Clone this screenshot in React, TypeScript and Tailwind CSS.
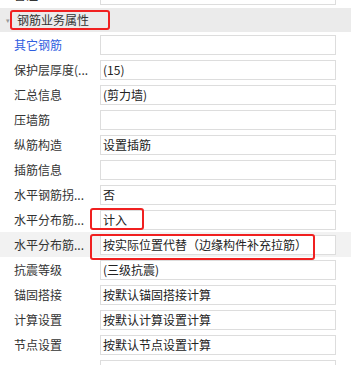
const font = { fontFamily: '"Noto Sans CJK SC", "Microsoft YaHei", sans-serif' };

type Row = { label: string; value: string; blue?: boolean; hl?: boolean; mark?: "short" | "long" };

const rows: Row[] = [
  { label: "其它钢筋", value: "", blue: true },
  { label: "保护层厚度(...", value: "(15)" },
  { label: "汇总信息", value: "(剪力墙)" },
  { label: "压墙筋", value: "" },
  { label: "纵筋构造", value: "设置插筋" },
  { label: "插筋信息", value: "" },
  { label: "水平钢筋拐...", value: "否" },
  { label: "水平分布筋...", value: "计入", mark: "short" },
  { label: "水平分布筋...", value: "按实际位置代替（边缘构件补充拉筋）", hl: true, mark: "long" },
  { label: "抗震等级", value: "(三级抗震)" },
  { label: "锚固搭接", value: "按默认锚固搭接计算" },
  { label: "计算设置", value: "按默认计算设置计算" },
  { label: "节点设置", value: "按默认节点设置计算" },
  { label: "", value: "" },
];

function PropRow({ row }: { row: Row }) {
  return (
    <div className={`relative flex h-[25px] items-start pt-[3px] ${row.hl ? "bg-[#f2f2f2]" : ""}`}>
      <div
        className={`w-[100px] shrink-0 pl-[14px] text-[12px] leading-[20px] whitespace-nowrap ${
          row.blue ? "text-[#2f5ee0]" : "text-[#333]"
        }`}
      >
        {row.label}
      </div>
      <div className="h-[20px] w-[236px] shrink-0 border border-[#dddddd] bg-white px-[2px] text-[12px] leading-[18px] text-[#222] whitespace-nowrap overflow-hidden">
        {row.value}
      </div>
      {row.mark === "short" && (
        <div className="absolute left-[90px] top-[1px] h-[22px] w-[54px] rounded-[3px] border-2 border-[#f02020]" />
      )}
      {row.mark === "long" && (
        <div className="absolute left-[90px] top-[2px] h-[26px] w-[225px] rounded-[3px] border-2 border-[#f02020]" />
      )}
    </div>
  );
}

export default function App() {
  return (
    <div className="h-[365px] w-[351px] overflow-hidden bg-white" style={font}>
      <div className="-mt-[18px]">
        <div className="flex h-[25px] items-start pt-[3px]">
          <div className="w-[100px] shrink-0 pl-[14px] text-[12px] leading-[20px] text-[#333]">备注</div>
          <div className="h-[20px] w-[236px] shrink-0 border border-[#dddddd]" />
        </div>
        <div className="relative mt-px flex h-[24px] items-center bg-[#ebebeb]">
          <span className="ml-[6px] text-[7px] leading-none text-[#999]">▾</span>
          <span className="ml-[7px] text-[12px] leading-[20px] text-[#333]">钢筋业务属性</span>
          <div className="absolute left-[10px] top-[2px] h-[20px] w-[100px] rounded-[3px] border-2 border-[#f02020]" />
        </div>
        {rows.map((r, i) => (
          <PropRow key={i} row={r} />
        ))}
      </div>
    </div>
  );
}
